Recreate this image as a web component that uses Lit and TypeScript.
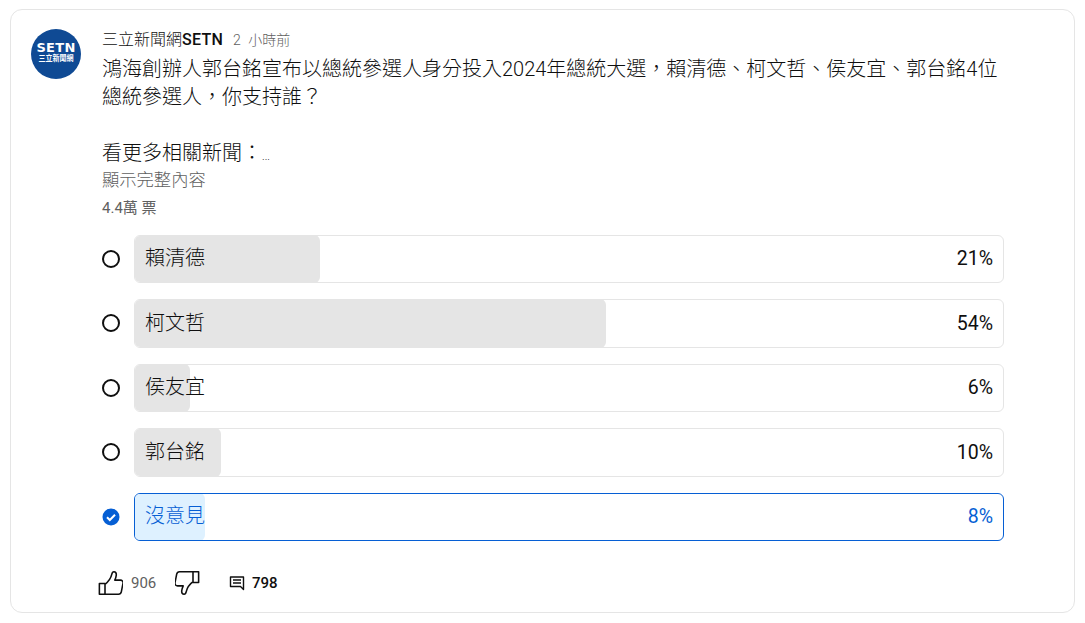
import { LitElement, html, css, svg } from 'lit';
import { customElement } from 'lit/decorators.js';

const OPTIONS = [
  { label: '賴清德', text: '21%', width: 21.4, selected: false },
  { label: '柯文哲', text: '54%', width: 54.35, selected: false },
  { label: '侯友宜', text: '6%', width: 6.45, selected: false },
  { label: '郭台銘', text: '10%', width: 10, selected: false },
  { label: '沒意見', text: '8%', width: 8.2, selected: true },
];

const thumb = svg`<path d="M3 12.5h5v9.5H3zM8 13.2c2.6-2 5.2-5.4 6-8.8.3-1.3.6-2.4 1.9-2.4 1.6 0 2.3 1.5 2.1 3.2-.2 1.5-.7 3-1.3 4.3h5c1.6 0 2.6 1.2 2.3 2.8l-1.5 7.6c-.3 1.3-1.2 2.1-2.5 2.1H8" transform="translate(0 -.5)"/>`;

@customElement('app-root')
export class AppRoot extends LitElement {
  static override styles = css`
    :host {
      display: block;
      width: 1085px;
      height: 623px;
      padding: 9px 10px 10px;
      box-sizing: border-box;
      background: #fff;
      font-family: Roboto, "Noto Sans CJK TC", sans-serif;
      color: #0f0f0f;
    }
    .card {
      height: 604px;
      box-sizing: border-box;
      border: 1px solid #e5e5e5;
      border-radius: 12px;
      padding: 19px 70px 0 20px;
      display: flex;
      gap: 21px;
    }
    .avatar {
      width: 50px;
      height: 50px;
      flex: none;
      border-radius: 50%;
      background: #0f4a94;
      color: #fff;
      display: flex;
      flex-direction: column;
      align-items: center;
    }
    .logo {
      font-family: "DejaVu Sans", sans-serif;
      font-weight: 700;
      font-size: 13px;
      line-height: 12px;
      letter-spacing: 0.3px;
      margin-top: 13px;
    }
    .logo-sub {
      font-size: 8px;
      line-height: 9px;
      font-weight: 700;
      white-space: nowrap;
      transform: scaleX(0.88);
    }
    .body { flex: 1; min-width: 0; }
    .head {
      display: flex;
      align-items: baseline;
      gap: 10px;
      font-size: 14px;
      line-height: 20px;
      padding-top: 1px;
    }
    .author { font-size: 16px; font-weight: 300; }
    .author b { font-weight: 500; letter-spacing: 0.25px; }
    .time { color: #606060; word-spacing: 4px; font-weight: 300; }
    .post {
      font-size: 20px;
      font-weight: 300;
      line-height: 28px;
      margin-top: 5px;
      width: 900px;
    }
    .dots { font-size: 11px; }
    .more {
      font-size: 17.3px;
      font-weight: 300;
      line-height: 22px;
      color: #606060;
      margin-top: -2px;
    }
    .votes {
      font-size: 15px;
      line-height: 20px;
      color: #606060;
      margin-top: 7px;
    }
    .options {
      margin-top: 16.5px;
      display: flex;
      flex-direction: column;
      gap: 16px;
    }
    .row {
      display: flex;
      align-items: center;
      gap: 14px;
    }
    .radio {
      width: 18px;
      height: 18px;
      flex: none;
      box-sizing: border-box;
      border: 2px solid #0f0f0f;
      border-radius: 50%;
    }
    .check { width: 18px; height: 18px; flex: none; display: block; }
    .bar {
      flex: 1;
      height: 48.5px;
      box-sizing: border-box;
      position: relative;
      border: 1px solid #e5e5e5;
      border-radius: 6px;
      display: flex;
      align-items: center;
      justify-content: space-between;
      padding: 0 10px;
      font-size: 20px;
      font-weight: 300;
      overflow: hidden;
    }
    .bar.sel { border-color: #065fd4; color: #065fd4; }
    .fill {
      position: absolute;
      left: -1px;
      top: -1px;
      bottom: -1px;
      background: #e5e5e5;
      border-radius: 6px;
    }
    .sel .fill { background: #def1ff; }
    .bar span { position: relative; }
    .label { margin-top: -4px; }
    .pct { font-size: 19.5px; font-weight: 400; }
    .actions {
      margin-top: 29.5px;
      display: flex;
      align-items: center;
      height: 24px;
    }
    .actions svg { display: block; flex: none; }
    .icon {
      width: 27px;
      height: 27px;
      fill: none;
      stroke: #0f0f0f;
      stroke-width: 1.4;
      stroke-linejoin: round;
    }
    .up { margin: 2px 0 0 -6px; }
    .down { transform: rotate(180deg); margin-left: 18.6px; }
    .count { font-size: 15px; color: #606060; margin-left: 8px; }
    .comment { width: 16px; height: 16px; margin-left: 27.5px; }
    .replies { font-size: 15px; font-weight: 500; margin-left: 6.5px; }
  `;

  override render() {
    return html`
      <div class="card">
        <div class="avatar">
          <div class="logo">SETN</div>
          <div class="logo-sub">三立新聞網</div>
        </div>
        <div class="body">
          <div class="head">
            <span class="author">三立新聞網<b>SETN</b></span>
            <span class="time">2 小時前</span>
          </div>
          <div class="post">
            鴻海創辦人郭台銘宣布以總統參選人身分投入2024年總統大選，賴清德、柯文哲、侯友宜、郭台銘4位總統參選人，你支持誰？<br /><br />看更多相關新聞：<span class="dots">...</span>
          </div>
          <div class="more">顯示完整內容</div>
          <div class="votes">4.4萬 票</div>
          <div class="options">
            ${OPTIONS.map(o => html`
              <div class="row">
                ${o.selected
                  ? html`<svg class="check" viewBox="0 0 18 18">
                      <circle cx="9" cy="9" r="8.5" fill="#065fd4"></circle>
                      <path d="M5 9.3l2.8 2.7L13 6.7" fill="none" stroke="#fff" stroke-width="2"></path>
                    </svg>`
                  : html`<div class="radio"></div>`}
                <div class="bar ${o.selected ? 'sel' : ''}">
                  <div class="fill" style="width:${o.width}%"></div>
                  <span class="label">${o.label}</span>
                  <span class="pct">${o.text}</span>
                </div>
              </div>
            `)}
          </div>
          <div class="actions">
            <svg class="icon up" viewBox="0 0 24 24">${thumb}</svg>
            <span class="count">906</span>
            <svg class="icon down" viewBox="0 0 24 24">${thumb}</svg>
            <svg class="icon comment" viewBox="0 0 16 16">
              <path d="M1.5 2h13v12.5L11.5 11.5H1.5z"></path>
              <path d="M4 5h8M4 8h8"></path>
            </svg>
            <span class="replies">798</span>
          </div>
        </div>
      </div>
    `;
  }
}
